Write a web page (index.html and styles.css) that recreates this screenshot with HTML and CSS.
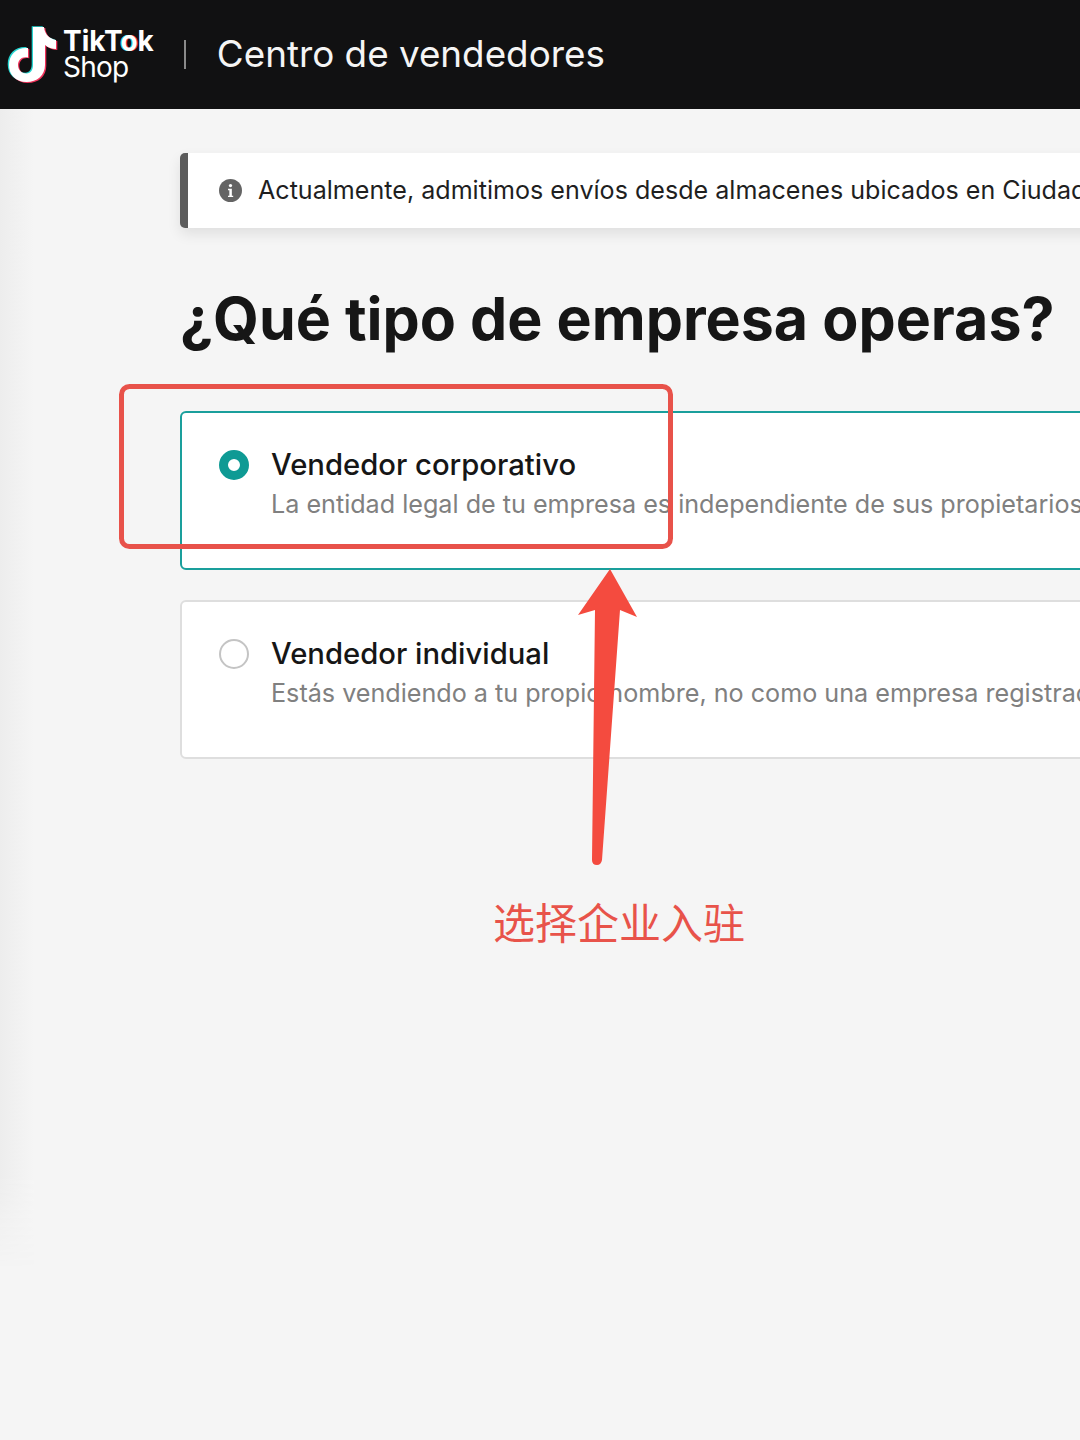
FILE: index.html
```html
<!DOCTYPE html>
<html lang="es">
<head>
<meta charset="utf-8">
<title>Centro de vendedores</title>
<link rel="stylesheet" href="styles.css">
</head>
<body>
<div class="page">
  <header class="topbar">
    <div class="brand">
      <svg class="note" viewBox="6 22 54 64" width="54" height="64" aria-hidden="true">
        <defs><path id="tt" d="M33 26 H44 C44.5 33.5 50 38 56 39 V48 C52 48 48 46.5 45 44 V64 C45 74.5 37 81 26.5 81 C16 81 9 74 9 64 C9 53.5 17 46 28 47 V56.5 C22 55 18 59 18 64 C18 69 22 72.5 26.5 72.5 C31 72.5 33 68.5 33 64 Z"/></defs>
        <use href="#tt" fill="#25d4d0" transform="translate(-1.3 -.8)"/>
        <use href="#tt" fill="#f0325a" transform="translate(1.3 .9)"/>
        <use href="#tt" fill="#ffffff"/>
      </svg>
      <div class="wordmark">
        <span class="wm-top">TikT<span class="wm-o">o</span>k</span>
        <span class="wm-bottom">Shop</span>
      </div>
    </div>
    <span class="divider"></span>
    <span class="product">Centro de vendedores</span>
  </header>

  <main class="content">
    <div class="notice">
      <svg class="info" viewBox="0 0 24 24" width="23" height="23" aria-hidden="true">
        <circle cx="12" cy="12" r="12" fill="#646464"/>
        <circle cx="12" cy="6.8" r="1.7" fill="#fff"/>
        <path d="M9.4 10.2h4v7.2h1.4v1.5H9.4v-1.5h1.4v-5.7H9.4z" fill="#fff"/>
      </svg>
      <span class="notice-text">Actualmente, admitimos envíos desde almacenes ubicados en Ciudad de México</span>
    </div>

    <h1 class="title">¿Qué tipo de empresa operas?</h1>

    <div class="options">
      <div class="option option-selected">
        <span class="radio radio-on"></span>
        <div class="option-body">
          <div class="option-name">Vendedor corporativo</div>
          <div class="option-desc">La entidad legal de tu empresa es independiente de sus propietarios</div>
        </div>
      </div>
      <div class="option">
        <span class="radio"></span>
        <div class="option-body">
          <div class="option-name">Vendedor individual</div>
          <div class="option-desc">Estás vendiendo a tu propio nombre, no como una empresa registrada</div>
        </div>
      </div>
    </div>
  </main>

  <div class="edge-shade"></div>

  <svg class="markup" viewBox="0 0 1080 1440" width="1080" height="1440" aria-hidden="true">
    <rect x="121.5" y="386.5" width="549" height="160" rx="8" fill="none" stroke="#e8524a" stroke-width="5"/>
    <path d="M610 569 L637 617 L620 610 L602 860 Q601 865 597 865 Q592 865 592 860 L595 610 L578 615 Z" fill="#f44b3f"/>
  </svg>
  <div class="caption">选择企业入驻</div>
</div>
</body>
</html>
```

FILE: styles.css
```css
* { box-sizing: border-box; }
html, body { margin: 0; padding: 0; }
body { background: #f5f5f5; font-family: Inter, "Liberation Sans", sans-serif; }

.page {
  position: relative;
  width: 1080px;
  height: 1440px;
  overflow: hidden;
  background: #f5f5f5;
}

.topbar {
  display: flex;
  align-items: center;
  height: 109px;
  background: #111112;
  color: #fff;
  padding-left: 6px;
}
.brand { display: flex; align-items: center; gap: 3px; }
.note { display: block; }
.wordmark { display: flex; flex-direction: column; margin-bottom: 1px; }
.wm-top { font-size: 28px; line-height: 26px; font-weight: 700; letter-spacing: 0; }
.wm-o { text-shadow: -1px 0 0 #25d4d0, 1px 0 0 #f0325a; }
.wm-bottom { font-size: 28px; line-height: 26px; font-weight: 400; letter-spacing: -.8px; }
.divider { width: 2px; height: 29px; background: #8a8a8a; margin-left: 30px; margin-bottom: 1px; }
.product { margin-left: 31px; margin-bottom: 2px; font-size: 36.8px; font-weight: 400; color: #f5f5f5; white-space: nowrap; }

.content { padding: 44px 0 0 180px; width: 1400px; }

.notice {
  display: flex;
  align-items: center;
  gap: 16px;
  height: 75px;
  background: #fff;
  border-left: 8px solid #5c5c5c;
  border-radius: 5px;
  padding: 0 0 1px 31px;
  box-shadow: 0 6px 14px rgba(0, 0, 0, .09);
}
.info { flex: none; }
.notice-text { font-size: 25.1px; color: #1f1f1f; white-space: nowrap; }

.title {
  margin: 52px 0 0 0;
  font-size: 59.1px;
  line-height: 78px;
  font-weight: 700;
  color: #161616;
  white-space: nowrap;
}

.options { display: flex; flex-direction: column; gap: 30px; margin-top: 53px; }
.option {
  display: flex;
  gap: 22px;
  height: 159px;
  background: #fff;
  border: 2px solid #dedede;
  border-radius: 6px;
  padding: 37px 0 0 37px;
}
.option-selected { border-color: #1a9f9c; }
.radio {
  flex: none;
  width: 30px;
  height: 30px;
  border-radius: 50%;
  border: 2px solid #c4c4c4;
  background: #fff;
}
.radio-on { border: 9px solid #0e9a94; }
.option-name { font-size: 29.25px; line-height: 30px; font-weight: 500; color: #161616; white-space: nowrap; }
.option-desc { margin-top: 8px; font-size: 25.15px; line-height: 32px; color: #808080; white-space: nowrap; }

.edge-shade {
  position: absolute;
  left: 0;
  top: 109px;
  width: 34px;
  height: 1160px;
  background: linear-gradient(to right, #ededed, #f5f5f5);
  -webkit-mask-image: linear-gradient(to bottom, #000 92%, transparent);
  mask-image: linear-gradient(to bottom, #000 92%, transparent);
}
.markup { position: absolute; left: 0; top: 0; }
.caption {
  position: absolute;
  left: 493px;
  top: 891px;
  font-family: "Noto Sans CJK SC", sans-serif;
  font-size: 42px;
  line-height: 60px;
  font-weight: 400;
  color: #e8534a;
  white-space: nowrap;
}
```
